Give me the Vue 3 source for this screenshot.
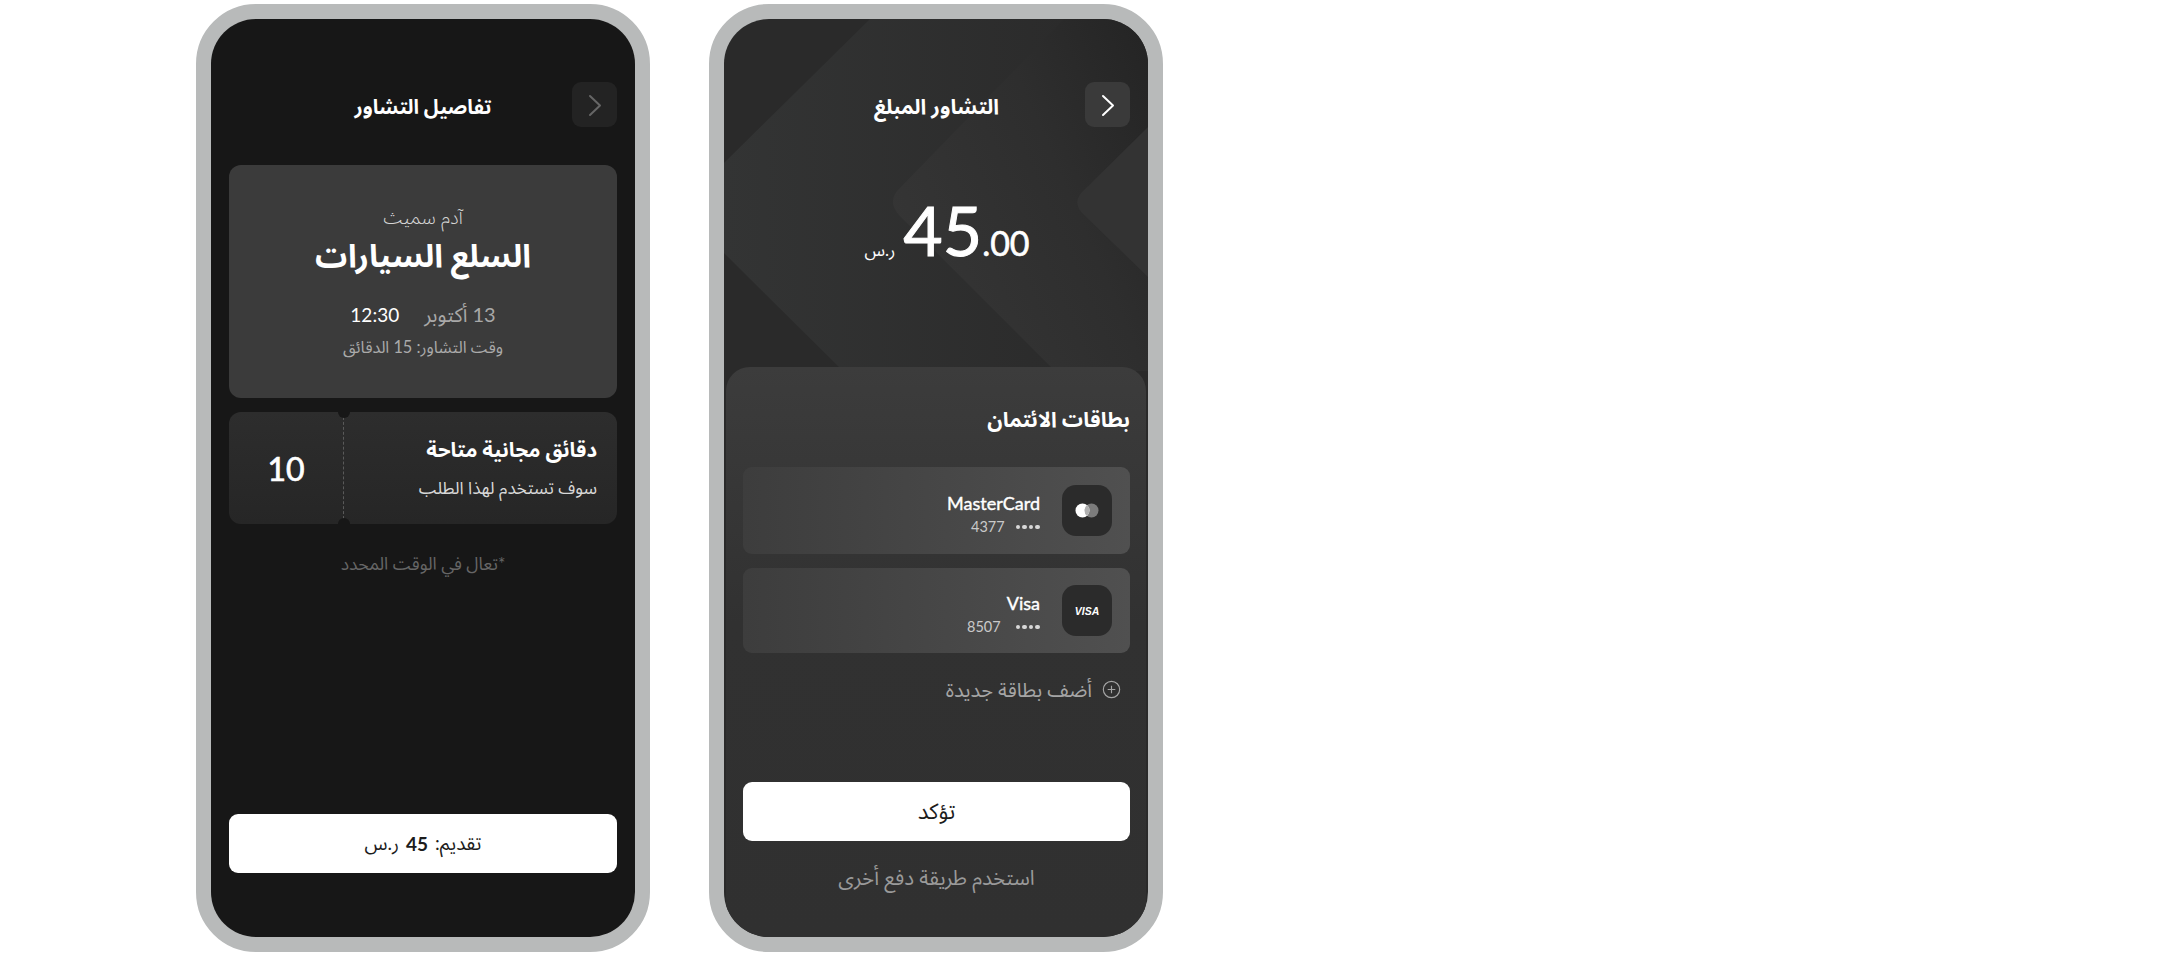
<script setup>
const cards = [
  { name: 'MasterCard', num: '4377', type: 'mc' },
  { name: 'Visa', num: '8507', type: 'visa' }
]
</script>

<template>
  <div class="page">
    <section class="phone">
      <div class="screen screen-one" dir="rtl">
        <header class="bar">
          <button class="back back-dim">
            <svg viewBox="0 0 24 24" width="24" height="24"><path d="M7 3l10 9.5L7 22" /></svg>
          </button>
          <h1 class="title title-one">تفاصيل التشاور</h1>
          <span class="bar-side"></span>
        </header>

        <div class="summary">
          <p class="person">آدم سميث</p>
          <h2 class="topic">السلع السيارات</h2>
          <div class="when">
            <span class="date">13 أكتوبر</span>
            <span class="time">12:30</span>
          </div>
          <p class="length">وقت التشاور: 15 الدقائق</p>
        </div>

        <div class="ticket">
          <div class="ticket-main">
            <p class="ticket-title">دقائق مجانية متاحة</p>
            <p class="ticket-sub">سوف تستخدم لهذا الطلب</p>
          </div>
          <div class="ticket-count">10</div>
          <i class="notch notch-top"></i>
          <i class="notch notch-bottom"></i>
        </div>

        <p class="note">*تعال في الوقت المحدد</p>

        <button class="primary push">
          <span>تقديم:</span>
          <b class="price">45</b>
          <span>ر.س</span>
        </button>
      </div>
    </section>

    <section class="phone">
      <div class="screen screen-two" dir="rtl">
        <svg class="pattern" viewBox="0 0 424 918" preserveAspectRatio="none">
          <defs>
            <linearGradient id="fadeA" x1="0" y1="0" x2="1" y2="0">
              <stop offset="0" stop-color="#333434" />
              <stop offset="1" stop-color="#2b2b2b" />
            </linearGradient>
            <linearGradient id="fadeB" x1="0" y1="0.6" x2="1" y2="0">
              <stop offset="0" stop-color="#353535" />
              <stop offset="0.55" stop-color="#2e2e2e" />
              <stop offset="1" stop-color="#242424" />
            </linearGradient>
          </defs>
          <path d="M0 144 L146 0 L345 0 L345 352 L119 352 L0 234 Z" fill="url(#fadeA)" />
          <path d="M173 172 Q164 184 175 196 L331 352 L424 352 L424 0 L340 0 Z" fill="url(#fadeB)" />
          <path d="M357 174 Q349 184 358 194 L424 258 L424 108 Z" fill="#333333" />
        </svg>

        <header class="bar layer">
          <button class="back">
            <svg viewBox="0 0 24 24" width="24" height="24"><path d="M7 3l10 9.5L7 22" /></svg>
          </button>
          <h1 class="title">التشاور المبلغ</h1>
          <span class="bar-side"></span>
        </header>

        <div class="amount layer" dir="ltr">
          <span class="currency">ر.س</span>
          <span class="whole">45</span>
          <span class="cents">.00</span>
        </div>

        <div class="sheet layer">
          <h2 class="sheet-title">بطاقات الائتمان</h2>

          <div class="cards">
            <div v-for="card in cards" :key="card.name" class="card" :class="'card-' + card.type">
              <span class="brand">
                <svg v-if="card.type === 'mc'" viewBox="0 0 24 15" width="24" height="15">
                  <circle cx="16.5" cy="7.5" r="7" fill="#7c7c7c" />
                  <circle cx="7.5" cy="7.5" r="7" fill="#fff" />
                  <path d="M12 2.1a7 7 0 0 1 0 10.8a7 7 0 0 1 0-10.8z" fill="#b0b0b0" />
                </svg>
                <span v-else class="visa">VISA</span>
              </span>
              <div class="card-text">
                <span class="card-name">{{ card.name }}</span>
                <span class="card-num">
                  <span class="dots"><i></i><i></i><i></i><i></i></span>
                  <span>{{ card.num }}</span>
                </span>
              </div>
            </div>
          </div>

          <div class="add">
            <svg viewBox="0 0 20 20" width="19" height="19">
              <circle cx="10" cy="10" r="8.6" />
              <path d="M10 6v8M6 10h8" />
            </svg>
            <span>أضف بطاقة جديدة</span>
          </div>

          <button class="primary confirm push">تؤكد</button>
          <p class="other">استخدم طريقة دفع أخرى</p>
        </div>
      </div>
    </section>
  </div>
</template>

<style>
html, body { margin: 0; background: #fff; }
</style>

<style scoped>
.page {
  width: 2160px;
  height: 953px;
  box-sizing: border-box;
  padding: 4px 0 0 196px;
  display: flex;
  gap: 59px;
  background: #fff;
  font-family: "Lato", "Noto Sans Arabic", "DejaVu Sans", sans-serif;
  color: #fff;
  overflow: hidden;
}
p, h1, h2 { margin: 0; font-weight: normal; }
button { border: 0; font: inherit; padding: 0; }

.phone {
  width: 454px;
  height: 948px;
  box-sizing: border-box;
  border: 15px solid #b8baba;
  border-radius: 60px;
  background: #b8baba;
}
.screen {
  height: 100%;
  box-sizing: border-box;
  border-radius: 45px;
  overflow: hidden;
  display: flex;
  flex-direction: column;
  position: relative;
}
.screen-one {
  background: #171717;
  padding: 63px 18px 64px 18px;
}
.screen-two {
  background: #2a2a2a;
  padding-top: 63px;
}
.pattern {
  position: absolute;
  inset: 0;
  width: 100%;
  height: 100%;
}
.layer { position: relative; }

.bar {
  display: grid;
  grid-template-columns: 45px 1fr 45px;
  align-items: center;
  flex: none;
}
.screen-two .bar { padding: 0 18px 0 19px; }
.back {
  width: 45px;
  height: 45px;
  border-radius: 9px;
  background: #3a3a3a;
  display: flex;
  align-items: center;
  justify-content: center;
}
.back svg { fill: none; stroke: #fff; stroke-width: 2; stroke-linecap: round; stroke-linejoin: round; }
.back-dim { background: #232323; }
.back-dim svg { stroke: #666; }
.title {
  text-align: center;
  font-size: 21px;
  font-weight: 700;
  line-height: 28px;
  margin-top: 2px;
}
.title-one { font-size: 20px; }

.summary {
  margin-top: 38px;
  height: 233px;
  flex: none;
  border-radius: 12px;
  background: #3b3b3b;
  display: flex;
  flex-direction: column;
  align-items: center;
  padding-top: 39px;
  box-sizing: border-box;
}
.person { font-size: 19px; line-height: 26px; color: #d5d5d5; font-weight: 300; }
.topic { font-size: 32px; line-height: 44px; font-weight: 700; margin-top: 3px; }
.when { display: flex; align-items: baseline; gap: 25px; margin-top: 23px; font-size: 20px; line-height: 28px; }
.date { color: #a8a8a8; }
.time { color: #fff; font-size: 19px; }
.length { font-size: 16.3px; line-height: 24px; color: #aaa; margin-top: 6px; }

.ticket {
  margin-top: 14px;
  height: 112px;
  flex: none;
  border-radius: 12px;
  background: linear-gradient(#2d2d2d, #262626);
  display: flex;
  position: relative;
  overflow: hidden;
}
.ticket-main {
  width: 274px;
  box-sizing: border-box;
  padding: 23px 20px 0 0;
  border-left: 1px dashed #5a5a5a;
  text-align: right;
}
.ticket-title { font-size: 20.5px; line-height: 28px; font-weight: 700; }
.ticket-sub { font-size: 17.3px; line-height: 24px; color: #d8d8d8; margin-top: 13px; }
.ticket-count {
  flex: 1;
  display: flex;
  align-items: center;
  justify-content: center;
  font-size: 32px;
  -webkit-text-stroke: 0.7px #fff;
}
.notch {
  position: absolute;
  left: 109px;
  width: 12px;
  height: 12px;
  border-radius: 50%;
  background: #171717;
}
.notch-top { top: -6px; }
.notch-bottom { bottom: -6px; }

.note { margin-top: 28px; text-align: center; font-size: 17.5px; line-height: 24px; color: #666; }

.primary {
  width: 100%;
  height: 59px;
  flex: none;
  border-radius: 9px;
  background: #fff;
  color: #1c1c1c;
  font-size: 19px;
  display: flex;
  align-items: center;
  justify-content: center;
  gap: 7px;
  direction: rtl;
}
.push { margin-top: auto; }
.price { font-weight: 700; }

.amount {
  margin: 65px auto 0;
  padding-left: 22px;
  display: flex;
  align-items: baseline;
  height: 93px;
  flex: none;
}
.currency { font-size: 17px; margin-right: 8px; }
.whole { font-size: 68px; line-height: 76px; -webkit-text-stroke: 1px #fff; }
.cents { font-size: 34px; -webkit-text-stroke: 0.6px #fff; }

.sheet {
  margin: 82px 2px 0 2px;
  flex: 1;
  border-radius: 24px 24px 0 0;
  background: linear-gradient(#3c3c3c, #313131 45%, #303030);
  padding: 38px 16px 0 17px;
  display: flex;
  flex-direction: column;
  min-height: 0;
}
.sheet-title { font-size: 21px; font-weight: 700; line-height: 28px; text-align: right; }
.cards { display: flex; flex-direction: column; gap: 14px; margin-top: 34px; }
.card {
  height: 87px;
  box-sizing: border-box;
  border-radius: 9px;
  background: linear-gradient(90deg, #3d3d3d, #505050);
  display: flex;
  align-items: center;
  gap: 22px;
  padding: 0 18px;
}
.card-visa { height: 85px; }
.brand {
  width: 50px;
  height: 51px;
  border-radius: 14px;
  background: #2b2b2b;
  display: flex;
  align-items: center;
  justify-content: center;
  flex: none;
}
.visa { font-size: 10.5px; font-weight: 700; font-style: italic; font-family: "Liberation Sans", sans-serif; }
.card-text { display: flex; flex-direction: column; align-items: flex-start; padding-top: 8px; }
.card-name { font-size: 18px; line-height: 24px; direction: ltr; -webkit-text-stroke: 0.4px #fff; }
.card-num { display: flex; align-items: center; gap: 11px; font-size: 14.5px; line-height: 22px; color: #c9c9c9; margin-top: 1px; }
.card-visa .card-num { gap: 15px; }
.dots { display: flex; gap: 2px; }
.dots i { width: 4.6px; height: 4.6px; border-radius: 50%; background: #d8d8d8; }

.add {
  display: flex;
  align-items: center;
  gap: 10px;
  padding-right: 9px;
  margin-top: 22px;
  font-size: 20px;
  line-height: 28px;
  color: #a5a5a5;
}
.add svg { fill: none; stroke: #a5a5a5; stroke-width: 1.2; }

.confirm { font-size: 22px; }
.other {
  text-align: center;
  font-size: 20.5px;
  line-height: 26px;
  color: #9a9a9a;
  margin: 23px 0 47px;
}
</style>
